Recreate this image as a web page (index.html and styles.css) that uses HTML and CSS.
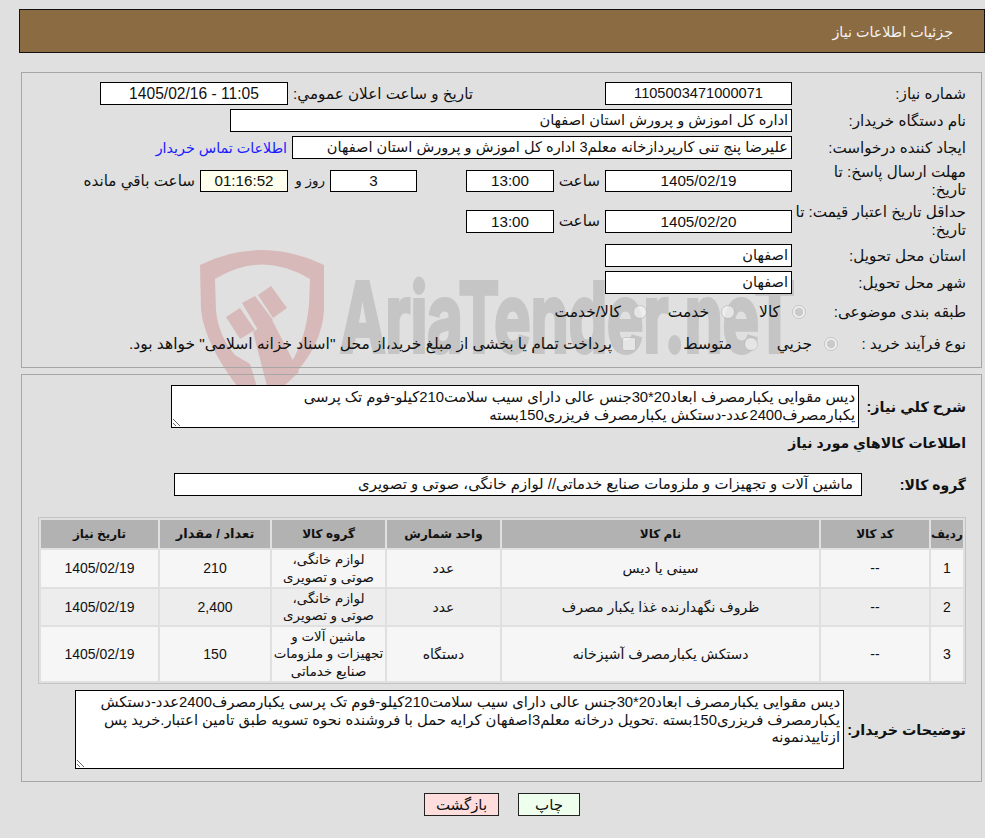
FILE: index.html
```html
<!DOCTYPE html>
<html lang="fa" dir="rtl">
<head>
<meta charset="utf-8">
<title>جزئیات اطلاعات نیاز</title>
<link rel="stylesheet" href="styles.css">
</head>
<body>
<svg class="watermark" viewBox="190 245 610 145" width="610" height="145" aria-hidden="true">
  <path class="wm-shield" d="M200 265Q262 235 324 265L324 310Q322 345 293 376L286 370Q305 345 309 305L310 279Q262 250 215 279L216 310Q218 335 235 355L250 364L258 390L240 390Q205 345 201 310Z"/>
  <path class="wm-shield" d="M226 317L240 308L255 330L240 339Z"/>
  <path class="wm-shield" d="M242 303L255 296L273 320L258 330Z"/>
  <path class="wm-shield" d="M258 295L271 286L287 308L273 318Z"/>
  <path class="wm-shield" d="M253 332L272 320L299 372L280 390L268 390Z"/>
  <text class="wm-text" x="340" y="352" textLength="455" lengthAdjust="spacingAndGlyphs" direction="ltr">AriaTender.neT</text>
</svg>
<main class="page">
  <header class="title-bar">جزئیات اطلاعات نیاز</header>

  <section class="panel panel-info">
    <div class="row">
      <div class="label">شماره نیاز:</div>
      <div class="box box-date center">1105003471000071</div>
      <div class="label-wide">تاریخ و ساعت اعلان عمومي:</div>
      <div class="box box-public center stamp">11:05 - 1405/02/16</div>
    </div>
    <div class="row">
      <div class="label">نام دستگاه خریدار:</div>
      <div class="box box-org">اداره کل اموزش و پرورش استان اصفهان</div>
    </div>
    <div class="row">
      <div class="label">ایجاد کننده درخواست:</div>
      <div class="box box-creator">علیرضا پنج تنی کارپردازخانه معلم3 اداره کل اموزش و پرورش استان اصفهان</div>
      <a class="contact" href="#">اطلاعات تماس خریدار</a>
    </div>
    <div class="row row-tall">
      <div class="label">مهلت ارسال پاسخ: تا<br>تاریخ:</div>
      <div class="box box-date box-short center stamp">1405/02/19</div>
      <div class="hour">ساعت</div>
      <div class="box box-time box-short center stamp">13:00</div>
      <div class="box box-days box-short center stamp">3</div>
      <div class="days-label">روز و</div>
      <div class="box box-timer box-short center stamp">01:16:52</div>
      <div class="remain">ساعت باقي مانده</div>
    </div>
    <div class="row row-tall">
      <div class="label">حداقل تاریخ اعتبار قیمت: تا<br>تاریخ:</div>
      <div class="box box-date center stamp">1405/02/20</div>
      <div class="hour">ساعت</div>
      <div class="box box-time center stamp">13:00</div>
    </div>
    <div class="row row-province">
      <div class="label">استان محل تحویل:</div>
      <div class="box box-date">اصفهان</div>
    </div>
    <div class="row">
      <div class="label">شهر محل تحویل:</div>
      <div class="box box-date">اصفهان</div>
    </div>
    <div class="row row-options">
      <div class="label label-cat">طبقه بندی موضوعی:</div>
      <label class="opt opt-71"><input type="radio" name="cat" checked disabled><span>کالا</span></label>
      <label class="opt opt-88"><input type="radio" name="cat" disabled><span>خدمت</span></label>
      <label class="opt"><input type="radio" name="cat" disabled><span>کالا/خدمت</span></label>
    </div>
    <div class="row row-options">
      <div class="label label-proc">نوع فرآیند خرید :</div>
      <label class="opt opt-80"><input type="radio" name="proc" checked disabled><span>جزيي</span></label>
      <label class="opt opt-122"><input type="radio" name="proc" disabled><span>متوسط</span></label>
      <label class="opt opt-check"><input type="checkbox" disabled><span>پرداخت تمام یا بخشی از مبلغ خرید،از محل "اسناد خزانه اسلامی" خواهد بود.</span></label>
    </div>
  </section>

  <section class="panel panel-goods">
    <div class="row">
      <div class="label-bold label-desc">شرح کلي نیاز:</div>
      <textarea class="area area-summary" readonly>دیس مقوایی یکبارمصرف ابعاد20*30جنس عالی دارای سیب سلامت210کیلو-فوم تک پرسی
یکبارمصرف2400عدد-دستکش یکبارمصرف فریزری150بسته</textarea>
    </div>
    <h2 class="goods-title">اطلاعات کالاهاي مورد نیاز</h2>
    <div class="row">
      <div class="label-bold label-group">گروه کالا:</div>
      <div class="box box-group">ماشین آلات و تجهیزات و ملزومات صنایع خدماتی// لوازم خانگی، صوتی و تصویری</div>
    </div>
    <table class="goods">
      <colgroup>
        <col class="c-idx"><col class="c-code"><col class="c-name"><col class="c-unit"><col class="c-group"><col class="c-qty"><col class="c-date">
      </colgroup>
      <thead>
        <tr><th>ردیف</th><th>کد کالا</th><th>نام کالا</th><th>واحد شمارش</th><th>گروه کالا</th><th class="th-qty">تعداد / مقدار</th><th>تاریخ نیاز</th></tr>
      </thead>
      <tbody>
        <tr class="r1"><td>1</td><td>--</td><td>سینی یا دیس</td><td>عدد</td><td class="td-group">لوازم خانگی،<br>صوتی و تصویری</td><td>210</td><td>1405/02/19</td></tr>
        <tr class="r2"><td>2</td><td>--</td><td>ظروف نگهدارنده غذا یکبار مصرف</td><td>عدد</td><td class="td-group">لوازم خانگی،<br>صوتی و تصویری</td><td>2,400</td><td>1405/02/19</td></tr>
        <tr class="r3"><td>3</td><td>--</td><td>دستکش یکبارمصرف آشپزخانه</td><td>دستگاه</td><td class="td-group">ماشین آلات و<br>تجهیزات و ملزومات<br>صنایع خدماتی</td><td>150</td><td>1405/02/19</td></tr>
      </tbody>
    </table>
    <div class="row row-notes">
      <div class="label-bold label-notes">توضیحات خریدار:</div>
      <textarea class="area area-notes" readonly>دیس مقوایی یکبارمصرف ابعاد20*30جنس عالی دارای سیب سلامت210کیلو-فوم تک پرسی یکبارمصرف2400عدد-دستکش
یکبارمصرف فریزری150بسته .تحویل درخانه معلم3اصفهان کرایه حمل با فروشنده نحوه تسویه طبق تامین اعتبار.خرید پس
ازتاییدنمونه</textarea>
    </div>
  </section>

  <div class="actions">
    <button class="btn btn-print" type="button">چاپ</button>
    <button class="btn btn-back" type="button">بازگشت</button>
  </div>
</main>
</body>
</html>
```
FILE: styles.css
```css
* { box-sizing: border-box; }
html, body { margin: 0; padding: 0; }
body {
  position: relative;
  min-height: 838px;
  background: #e0e0e0;
  color: #111;
  font-family: "Liberation Sans", "DejaVu Sans", sans-serif;
  font-size: 15.2px;
  line-height: 18px;
  overflow: hidden;
}
.watermark { position: absolute; left: 190px; top: 245px; z-index: -1; }
.wm-shield { fill: #d8b9b9; }
.wm-text {
  fill: #c5c5c5;
  stroke: #c5c5c5;
  stroke-width: 4px;
  font-family: Inter, Roboto, sans-serif;
  font-weight: 700;
  font-size: 96px;
}
.page { padding: 9px 0 0 19px; }
.title-bar {
  height: 44px;
  background: #8b6b42;
  border: 1px solid #111;
  color: #f4f4f4;
  line-height: 44px;
  padding-right: 31px;
  font-size: 14.3px;
}
.panel {
  margin: 19px 3px 0 2px;
  border: 1px solid #a6a6a6;
  padding-right: 15px;
}
.panel-info { height: 296px; padding-top: 9px; }
.panel-goods { margin-top: 6px; height: 408px; padding-top: 10px; }

.row { display: flex; align-items: center; margin-bottom: 4px; }
.row-tall { height: 36px; }
.row-province { margin-top: 5px; }
.row-options { height: 28px; }
.label { width: 174px; flex: none; white-space: nowrap; }

.box {
  flex: none;
  height: 23px;
  line-height: 21px;
  background: #fff;
  border: 1px solid #000;
  padding: 0 3px;
  font-size: 14.6px;
  white-space: nowrap;
  overflow: hidden;
}
.box-short { height: 22px; line-height: 20px; }
.center { text-align: center; }
.stamp { font-size: 15.2px; }
.box-date { width: 187px; }
.box-public { width: 188px; font-size: 15.6px; }
.box-org { width: 562px; }
.box-creator { width: 500px; }
.box-time { width: 88px; }
.box-days { width: 87px; margin-right: 49px; }
.box-timer { width: 88px; background: #ffffee; }
.box-group { width: 688px; padding-right: 8px; font-size: 14.9px; }

.label-wide { width: 317px; flex: none; padding-right: 132px; white-space: nowrap; }
.contact { margin-right: 5px; color: #1a1aff; text-decoration: none; white-space: nowrap; font-size: 14.3px; }
.hour { width: 51px; flex: none; padding-right: 5px; white-space: nowrap; }
.days-label { width: 42px; flex: none; padding-right: 5px; white-space: nowrap; font-size: 13.5px; }
.remain { margin-right: 5px; white-space: nowrap; }

.label-cat { width: 160px; }
.label-proc { width: 128px; }
.opt { display: flex; align-items: center; flex: none; white-space: nowrap; font-size: 15.5px; }
.opt input { margin: 0 0 0 12px; width: 14px; height: 14px; flex: none; }
.opt-71 { width: 71px; }
.opt-88 { width: 88px; }
.opt-80 { width: 80px; }
.opt-122 { width: 122px; }
.opt-check input { margin-left: 10px; }

.label-bold { flex: none; font-weight: 700; font-size: 14.3px; white-space: nowrap; }
.label-desc { width: 107px; }
.label-group { width: 104px; font-size: 14px; }
.label-notes { width: 122px; }

.area {
  display: block;
  flex: none;
  background: #fff;
  border: 1px solid #000;
  border-radius: 0;
  font-family: inherit;
  font-size: 14.8px;
  line-height: 17.5px;
  color: #111;
  padding: 3px;
  margin: 0;
  outline: none;
  white-space: pre;
  overflow: hidden;
}
.area-summary { width: 688px; height: 43px; }
.area-notes { width: 769px; height: 79px; }

.goods-title {
  margin: 6px 0 9px;
  height: 30px;
  line-height: 18px;
  font-size: 14px;
  font-weight: 700;
}

.goods {
  width: 928px;
  table-layout: fixed;
  border-collapse: separate;
  border-spacing: 2px;
  border: 1px solid #c4c4c4;
  margin: 21px 0 6px;
  font-size: 14px;
}
.c-idx { width: 32px; }
.c-code { width: 108px; }
.c-name { width: 317px; }
.c-unit { width: 113px; }
.c-group { width: 113px; }
.c-qty { width: 110px; }
.c-date { width: 117px; }
.goods th {
  height: 28px;
  padding: 0;
  background: #b2b2b2;
  font-size: 12px;
  font-weight: 700;
  text-align: center;
  white-space: nowrap;
}
.goods th.th-qty { font-size: 13px; }
.goods td { padding: 1px 1px 0; text-align: center; line-height: 17.3px; }
.goods td.td-group { font-size: 13.4px; white-space: nowrap; padding-top: 0; }
.r1 td { height: 37px; background: #f6f6f6; }
.r2 td { height: 36px; background: #ededed; }
.r3 td { height: 54px; background: #f6f6f6; }

.actions { display: flex; justify-content: center; gap: 19px; margin-top: 11px; }
.btn {
  height: 23px;
  padding: 0;
  border: 1px solid #222;
  border-radius: 0;
  font-family: inherit;
  font-size: 15px;
  color: #111;
}
.btn-print { width: 62px; background: #eeffee; }
.btn-back { width: 75px; background: #ffdddd; }
```
